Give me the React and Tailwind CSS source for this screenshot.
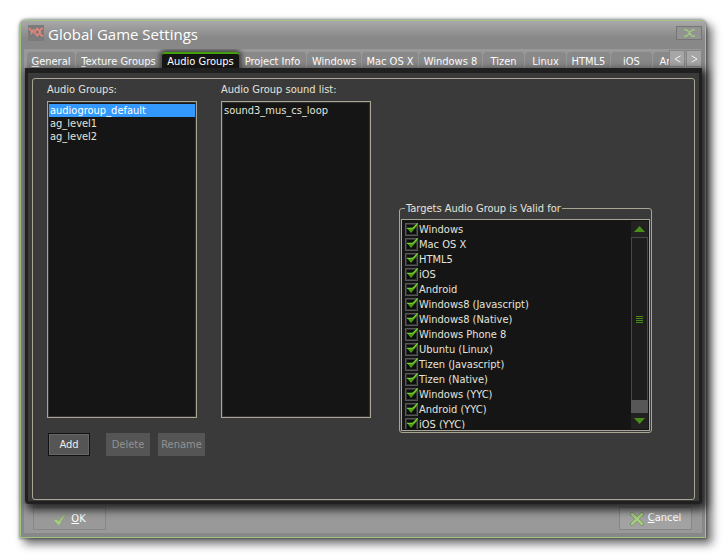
import React from "react";

const tabs = [
  { name: "General", mnemonic: true, width: "w-[49px]" },
  { name: "Texture Groups", mnemonic: true, width: "w-[86px]" },
  { name: "Audio Groups", width: "w-[77px]", active: true },
  { name: "Project Info", width: "w-[68px]" },
  { name: "Windows", width: "w-[55px]" },
  { name: "Mac OS X", width: "w-[57px]" },
  { name: "Windows 8", width: "w-[64px]" },
  { name: "Tizen", width: "w-[42px]" },
  { name: "Linux", width: "w-[42px]" },
  { name: "HTML5", width: "w-[44px]" },
  { name: "iOS", width: "w-[42px]" },
  { name: "Android", width: "w-[52px]" },
];

const targets = [
  "Windows",
  "Mac OS X",
  "HTML5",
  "iOS",
  "Android",
  "Windows8 (Javascript)",
  "Windows8 (Native)",
  "Windows Phone 8",
  "Ubuntu (Linux)",
  "Tizen (Javascript)",
  "Tizen (Native)",
  "Windows (YYC)",
  "Android (YYC)",
  "iOS (YYC)",
];

function Tab({ name, width, active, mnemonic }) {
  if (active) {
    return (
      <button
        role="tab"
        aria-selected="true"
        className={`${width} relative z-10 h-4 shrink-0 rounded-t-[3px] border-t-2 border-[#45a010] bg-[#151515] text-center leading-4 whitespace-nowrap text-white shadow-[0_0_5px_2px_#222222cc]`}
      >
        {name}
      </button>
    );
  }
  return (
    <button
      role="tab"
      aria-selected="false"
      className={`${width} h-4 shrink-0 rounded-t-[4px] border-r border-[#999] bg-[#898989] text-center leading-5 whitespace-nowrap text-white`}
    >
      {mnemonic ? <Mnemonic text={name} /> : name}
    </button>
  );
}

function Mnemonic({ text }) {
  return (
    <>
      <span className="underline underline-offset-1">{text[0]}</span>
      {text.slice(1)}
    </>
  );
}

function ListBox({ id, label, items, selected }) {
  return (
    <div className="w-[150px]">
      <div id={id} className="mb-1 h-4 leading-[18px] whitespace-nowrap">
        {label}
      </div>
      <ul
        role="listbox"
        aria-labelledby={id}
        className="h-[317px] border border-[#aaa592] bg-[#151515] p-px pt-0.5 outline outline-1 -outline-offset-2 outline-[#333]"
      >
        {items.map((item) => (
          <li
            key={item}
            role="option"
            aria-selected={item === selected}
            className={
              item === selected
                ? "h-[13px] bg-[#3399ff] pl-px leading-[13px] text-white"
                : "h-[13px] pl-px leading-[13px]"
            }
          >
            {item}
          </li>
        ))}
      </ul>
    </div>
  );
}

function Target({ name }) {
  return (
    <label className="flex h-[15px] items-center gap-px whitespace-nowrap">
      <span className="relative block h-[13px] w-[13px]">
        <input
          type="checkbox"
          defaultChecked
          className="peer block h-[13px] w-[13px] appearance-none border border-[#565656] bg-[#0d0d0d] outline outline-1 -outline-offset-2 outline-[#333]"
        />
        <svg
          viewBox="0 0 14 14"
          className="pointer-events-none absolute top-0 left-0 hidden h-3.5 w-3.5 peer-checked:block"
        >
          <path d="M2 5H8L12 1V3L6 10Z" fill="#4a9a14" />
          <path d="M2 5.2H7L8.5 4.7L12.6 .4" fill="none" stroke="#7ddc38" strokeWidth="1.1" />
        </svg>
      </span>
      <span className="leading-[15px]">{name}</span>
    </label>
  );
}

function ScrollBar() {
  return (
    <div className="flex w-[17px] flex-col bg-[#222]">
      <button aria-label="Scroll up" className="flex h-4 items-center justify-center">
        <svg viewBox="0 0 11 6" className="h-1.5 w-[11px]">
          <path d="M0 6L5.5 0L11 6Z" fill="#4c8c18" />
        </svg>
      </button>
      <div className="flex flex-1 items-center justify-center border border-b-0 border-[#484848] bg-[#1d1d1d]">
        <svg viewBox="0 0 7 7" className="h-[7px] w-[7px]" shapeRendering="crispEdges">
          <path d="M0 0H7V1H0ZM0 2H7V3H0ZM0 4H7V5H0ZM0 6H7V7H0Z" fill="#4c8c18" />
        </svg>
      </div>
      <div className="h-[13px] bg-[#575757]" />
      <button aria-label="Scroll down" className="flex h-4 items-center justify-center">
        <svg viewBox="0 0 11 6" className="h-1.5 w-[11px]">
          <path d="M0 0L5.5 6L11 0Z" fill="#4c8c18" />
        </svg>
      </button>
    </div>
  );
}

function TitleBar() {
  return (
    <header className="flex h-7 items-start bg-linear-to-b from-[#a9a9a9] to-[#888] to-60% pr-[3px] pl-[7px]">
      <svg viewBox="0 0 16 16" className="mt-1 h-4 w-4 bg-[#7b7b7b]">
        <g fill="none" stroke="#e5857b" strokeWidth="1.6">
          <path d="M0.5 3.8H2L4.2 7.2M6 3.8L4.2 7.2L3 9" />
          <path d="M9.2 3.6L12.2 7.2L9.2 10.8L6.2 7.2Z" />
          <path d="M11.6 6L13.2 3.6H15M11.8 8.4L13.6 10.8H15.5" />
        </g>
      </svg>
      <h1 className="ml-1 flex-1 font-['Open_Sans',sans-serif] text-[15px] leading-[26px] whitespace-nowrap text-white">
        Global Game Settings
      </h1>
      <button
        aria-label="Close"
        className="mt-[5px] flex h-3.5 w-[26px] items-center justify-center border border-[#767676] bg-[#939393]"
      >
        <svg viewBox="0 0 11 8" className="h-2 w-[11px]">
          <path
            d="M0 .7H2.5L5.5 3.5L8.5 .7H11M0 7.3H2.5L5.5 4.2L8.5 7.3H11"
            fill="none"
            stroke="#9fc67f"
            strokeWidth="1.5"
          />
        </svg>
      </button>
    </header>
  );
}

function TabStrip() {
  return (
    <div className="mx-[3px] flex h-[19px] bg-[#999]">
      <div role="tablist" className="flex min-w-0 flex-1 items-end overflow-hidden pl-[3px]">
        {tabs.map((tab) => (
          <Tab key={tab.name} {...tab} />
        ))}
      </div>
      <div className="flex gap-px pt-px">
        <button
          aria-label="Previous tabs"
          className="flex h-[17px] w-4 items-center justify-center border border-[#858585] bg-[#a6a6a6]"
        >
          <svg viewBox="0 0 7 8" className="h-2 w-[7px]">
            <path d="M6.5 .8L1 4L6.5 7.2" fill="none" stroke="#f2f2f2" />
          </svg>
        </button>
        <button
          aria-label="Next tabs"
          className="flex h-[17px] w-4 items-center justify-center border border-[#858585] bg-[#a6a6a6]"
        >
          <svg viewBox="0 0 7 8" className="h-2 w-[7px]">
            <path d="M.5 .8L6 4L.5 7.2" fill="none" stroke="#f2f2f2" />
          </svg>
        </button>
      </div>
    </div>
  );
}

export default function App() {
  return (
    <div className="bg-white p-5 font-['DejaVu_Sans_Condensed','DejaVu_Sans',sans-serif] text-[11px] text-[#e4e4dc]">
      <main className="rounded-t-md border border-[#a2c483] bg-[#888] shadow-[5px_5px_10px_1px_#00000090,0_0_3px_1px_#00000060]">
        <TitleBar />
        <TabStrip />
        <section className="relative mr-[3px] ml-1 rounded-b-sm border-x-[3px] border-t-[5px] border-b-[3px] border-[#202020] bg-[#3a3a3a] px-1 pt-[5px] pb-px shadow-[3px_4px_8px_2px_#000000c0]">
          <div className="flex h-[422px] gap-6 rounded-[3px] border border-[#aaa592] px-3.5 pt-0.5">
            <div>
              <div className="flex gap-6">
                <ListBox
                  id="groups-label"
                  label="Audio Groups:"
                  items={["audiogroup_default", "ag_level1", "ag_level2"]}
                  selected="audiogroup_default"
                />
                <ListBox
                  id="sounds-label"
                  label="Audio Group sound list:"
                  items={["sound3_mus_cs_loop"]}
                />
              </div>
              <div className="flex pt-[15px] pl-px leading-[18px]">
                <button className="h-[23px] w-[42px] border border-[#111] bg-[#555] pt-px text-[#f0f0e6] outline outline-1 -outline-offset-2 outline-[#666]">
                  Add
                </button>
                <button disabled className="ml-4 h-[23px] w-11 bg-[#555] pt-px text-[#929292]">
                  Delete
                </button>
                <button disabled className="ml-2 h-[23px] w-[47px] bg-[#555] pt-px text-[#929292]">
                  Rename
                </button>
              </div>
            </div>
            <fieldset className="mt-[120px] ml-1 h-[232px] w-[253px] rounded-[3px] border border-[#aaa592] px-px pb-px">
              <legend className="ml-1 h-3.5 px-px leading-4 whitespace-nowrap">
                Targets Audio Group is Valid for
              </legend>
              <div className="mt-1 flex h-[212px] border border-[#aaa592] bg-[#151515] p-px">
                <div className="flex-1 overflow-hidden pt-px pl-0.5">
                  {targets.map((name) => (
                    <Target key={name} name={name} />
                  ))}
                </div>
                <ScrollBar />
              </div>
            </fieldset>
          </div>
        </section>
        <footer className="mx-[3px] mb-1 flex h-[29px] items-start justify-between bg-[#999] pt-[3px] pr-2.5 pl-[9px] text-white">
          <button className="flex h-[23px] w-[73px] items-center justify-center gap-1 border border-[#868686] pt-px">
            <svg viewBox="0 0 14 13" className="h-[13px] w-3.5">
              <path d="M0.5 7L3 6L5.8 8Q9 3 13.5 .5Q9 6 6.5 12.5H5.5Z" fill="#a5cf80" stroke="#82966f" strokeWidth=".5" />
            </svg>
            <span>
              <Mnemonic text="OK" />
            </span>
          </button>
          <button className="flex h-[23px] w-[73px] items-center justify-center gap-1 border border-[#868686] bg-[#a2a2a2]">
            <svg viewBox="0 0 14 14" className="h-3.5 w-3.5">
              <path d="M2 2L12 12M12 2L2 12" stroke="#75875f" strokeWidth="3.8" strokeLinecap="round" />
              <path d="M2 2L12 12M12 2L2 12" stroke="#a5cf80" strokeWidth="2.5" strokeLinecap="round" />
            </svg>
            <span>
              <Mnemonic text="Cancel" />
            </span>
          </button>
        </footer>
      </main>
    </div>
  );
}
